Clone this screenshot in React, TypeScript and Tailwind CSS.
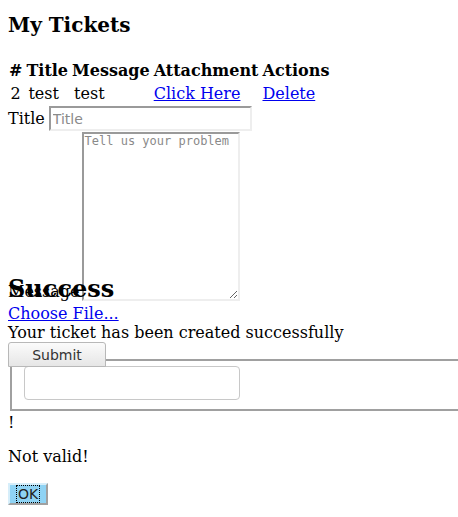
export default function App() {
  return (
    <div className="relative min-h-screen bg-white px-2 font-['DejaVu_Serif',serif] text-[16px] leading-[normal] text-black">
      <h2 className="pt-[13px] pb-[21px] text-[20px] font-bold">My Tickets</h2>

      <table className="border-separate border-spacing-[2px] -ml-[2px]">
        <thead>
          <tr>
            <th className="p-px font-bold">#</th>
            <th className="p-px font-bold">Title</th>
            <th className="p-px font-bold">Message</th>
            <th className="p-px font-bold">Attachment</th>
            <th className="p-px font-bold">Actions</th>
          </tr>
        </thead>
        <tbody>
          <tr>
            <td className="p-px text-center">2</td>
            <td className="p-px pl-[3px]">test</td>
            <td className="p-px pl-[3px]">test</td>
            <td className="p-px">
              <a href="#" className="text-[#0000ee] underline">Click Here</a>
            </td>
            <td className="p-px">
              <a href="#" className="text-[#0000ee] underline">Delete</a>
            </td>
          </tr>
        </tbody>
      </table>

      <form className="flex flex-col items-start">
        <div className="flex items-center gap-[4px]">
          <label>Title</label>
          <input
            placeholder="Title"
            className="h-[25px] w-[203px] border-2 border-t-[#9a9a9a] border-l-[#9a9a9a] border-r-[#eeeeee] border-b-[#eeeeee] px-[2px] font-['DejaVu_Sans',sans-serif] text-[14px] placeholder:text-[#8a8a8a]"
          />
        </div>
        <div className="mt-px mb-[3px] flex items-end gap-[2px]">
          <label className="leading-[18px]">Message</label>
          <textarea
            placeholder="Tell us your problem"
            className="h-[169px] w-[158px] border-2 border-t-[#9a9a9a] border-l-[#9a9a9a] border-r-[#eeeeee] border-b-[#eeeeee] px-[1px] font-['DejaVu_Sans_Mono',monospace] text-[12px] leading-[14px] placeholder:text-[#8a8a8a]"
          />
        </div>
        <a href="#" className="text-[#0000ee] underline">Choose File... </a>
        <p>Your ticket has been created successfully</p>

        <button
          type="button"
          className="relative z-10 h-[25px] w-[98px] rounded-t-[3px] border border-[#b8b8b8] bg-gradient-to-b from-[#fbfbfb] to-[#e6e6e6] font-['DejaVu_Sans',sans-serif] text-[14px] text-[#333]"
        >
          Submit
        </button>
        <div className="-mt-[8px] ml-[2px] h-[52px] w-[460px] border-y-2 border-l-2 border-[#a0a0a0] pl-[12px] pt-[5px]">
          <input className="h-[34px] w-[216px] rounded-[4px] border border-[#c8c8c8] bg-white" />
        </div>
        <p className="mt-[2px]">!</p>
        <p className="mt-[15px]">Not valid!</p>
        <button
          type="button"
          className="mt-[17px] h-[22px] w-[40px] border-2 border-t-[#d6eefa] border-l-[#d6eefa] border-r-[#a0a0a0] border-b-[#a0a0a0] bg-[#8fd3f4] px-[3px] font-['DejaVu_Sans',sans-serif] text-[14px] text-[#222]"
        >
          <span className="outline-1 outline-dotted outline-black px-[1px]">OK</span>
        </button>
      </form>

      <h2 className="absolute left-2 top-[274px] text-[24px] font-bold">Success</h2>
    </div>
  );
}
